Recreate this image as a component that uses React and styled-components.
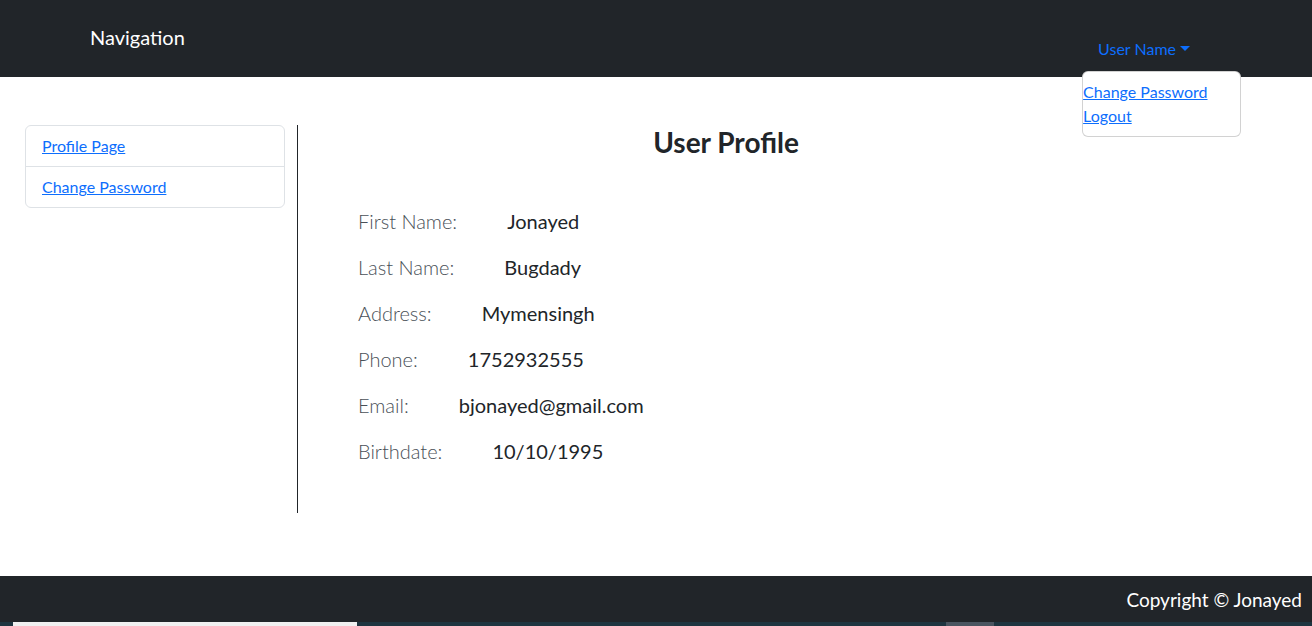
import styled, { createGlobalStyle } from "styled-components";

const GlobalStyle = createGlobalStyle`
  * {
    box-sizing: border-box;
  }

  body {
    margin: 0;
    font-family: "Segoe UI", Lato, "Liberation Sans", sans-serif;
    color: #212529;
    background: #fff;
  }
`;

const Shell = styled.div`
  width: 1312px;
  height: 626px;
  display: flex;
  flex-direction: column;
  overflow: hidden;
`;

const Navbar = styled.header`
  height: 77px;
  background: #212529;
  display: flex;
  align-items: flex-start;
  padding: 0 122px 0 90px;
`;

const Brand = styled.div`
  margin-top: 22px;
  font-size: 20px;
  line-height: 30px;
  color: #fff;
`;

const UserMenu = styled.div`
  position: relative;
  margin-left: auto;
  margin-top: 37px;
`;

const Toggle = styled.a`
  font-size: 16px;
  line-height: 24px;
  color: #0d6efd;
  text-decoration: none;
  cursor: pointer;

  &::after {
    content: "";
    display: inline-block;
    margin-left: 4px;
    vertical-align: 4px;
    border-top: 5px solid;
    border-left: 5px solid transparent;
    border-right: 5px solid transparent;
  }
`;

const Menu = styled.div`
  position: absolute;
  top: 34px;
  left: -16px;
  width: 159px;
  padding: 8px 0;
  background: #fff;
  border: 1px solid rgba(0, 0, 0, 0.175);
  border-radius: 6px;
  display: flex;
  flex-direction: column;
  z-index: 2;
`;

const MenuLink = styled.a`
  font-size: 16px;
  line-height: 24px;
  color: #0d6efd;
  text-decoration: underline;
`;

const Main = styled.main`
  flex: 1;
  display: flex;
  align-items: flex-start;
  padding: 48px 0 63px 25px;
`;

const SideList = styled.nav`
  width: 260px;
  border: 1px solid #dee2e6;
  border-radius: 6px;
  display: flex;
  flex-direction: column;
`;

const SideItem = styled.div`
  padding: 8px 16px;
  border-top: ${(p) => (p.$first ? "none" : "1px solid #dee2e6")};
`;

const SideLink = styled.a`
  font-size: 16px;
  line-height: 24px;
  color: #0d6efd;
  text-decoration: underline;
`;

const Content = styled.section`
  margin-left: 12px;
  width: 857px;
  height: 388px;
  border-left: 1px solid #212529;
`;

const Title = styled.h3`
  margin: 0 0 47px;
  text-align: center;
  font-size: 28px;
  line-height: 34px;
  font-weight: 700;
  color: #212529;
`;

const Fields = styled.div`
  padding-left: 60px;
  display: flex;
  flex-direction: column;
  gap: 16px;
`;

const Field = styled.div`
  display: flex;
  align-items: baseline;
  gap: 50px;
  font-size: 20px;
  line-height: 30px;
`;

const Label = styled.span`
  font-weight: 300;
  color: #495057;
`;

const Value = styled.span`
  color: #212529;
`;

const Footer = styled.footer`
  height: 46px;
  background: #212529;
  display: flex;
  align-items: center;
  justify-content: flex-end;
  padding-right: 10px;
  color: #fff;
  font-size: 19px;
`;

const Taskbar = styled.div`
  height: 4px;
  background: #1e3540;
  display: flex;
`;

const TaskSlot = styled.div`
  width: ${(p) => p.$w}px;
  margin-left: ${(p) => p.$ml}px;
  background: ${(p) => p.$bg};
`;

const fields = [
  ["First Name:", "Jonayed"],
  ["Last Name:", "Bugdady"],
  ["Address:", "Mymensingh"],
  ["Phone:", "1752932555"],
  ["Email:", "bjonayed@gmail.com"],
  ["Birthdate:", "10/10/1995"],
];

export default function App() {
  return (
    <>
      <GlobalStyle />
      <Shell>
        <Navbar>
          <Brand>Navigation</Brand>
          <UserMenu>
            <Toggle>User Name</Toggle>
            <Menu>
              <MenuLink href="#">Change Password</MenuLink>
              <MenuLink href="#">Logout</MenuLink>
            </Menu>
          </UserMenu>
        </Navbar>

        <Main>
          <SideList>
            <SideItem $first>
              <SideLink href="#">Profile Page</SideLink>
            </SideItem>
            <SideItem>
              <SideLink href="#">Change Password</SideLink>
            </SideItem>
          </SideList>

          <Content>
            <Title>User Profile</Title>
            <Fields>
              {fields.map(([label, value]) => (
                <Field key={label}>
                  <Label>{label}</Label>
                  <Value>{value}</Value>
                </Field>
              ))}
            </Fields>
          </Content>
        </Main>

        <Footer>Copyright © Jonayed</Footer>
        <Taskbar>
          <TaskSlot $ml={13} $w={344} $bg="#f0f0f0" />
          <TaskSlot $ml={589} $w={48} $bg="#4a5560" />
        </Taskbar>
      </Shell>
    </>
  );
}
